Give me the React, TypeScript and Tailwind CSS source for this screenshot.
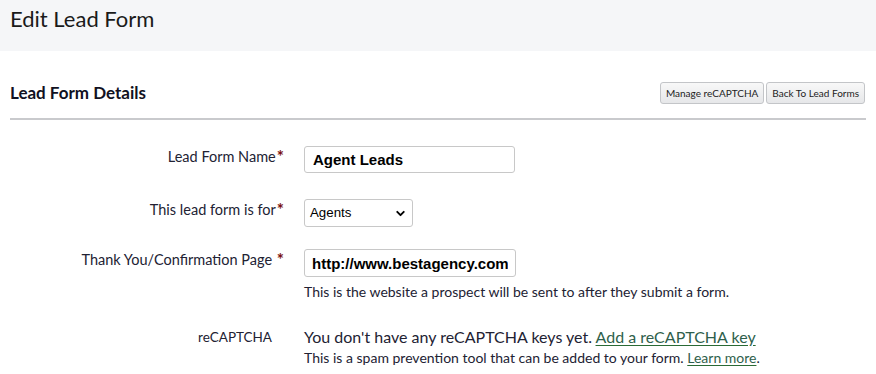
import { ChevronDown } from 'lucide-react';

const font = { fontFamily: 'Lato, "Open Sans", sans-serif' };

function Req() {
    return <span className="ml-[1px] align-top text-[17px] font-bold leading-none text-[#7a0f0f]">*</span>;
}

export default function App() {
    return (
        <div className="h-[374px] w-[876px] overflow-hidden bg-white text-[#222233]" style={font}>
            <div className="flex h-[51px] items-start bg-[#f5f6f8] px-[10px] pt-[5px]">
                <h1 className="text-[22px] leading-[28px] text-[#1a1a1a]">Edit Lead Form</h1>
            </div>

            <div className="px-[10px]">
                <div className="flex h-[69px] items-end justify-between border-b-2 border-[#c9cacd] pb-[14px]">
                    <h2 className="text-[17px] font-bold leading-[22px] text-[#111122]">Lead Form Details</h2>
                    <div className="mr-[1px] flex gap-[2px]">
                        <button className="h-[22px] rounded-[3px] border border-[#c3c5c8] bg-gradient-to-b from-[#f8f8f8] to-[#e6e7e9] px-[5px] text-[10px] text-[#222]">
                            Manage reCAPTCHA
                        </button>
                        <button className="h-[22px] rounded-[3px] border border-[#c3c5c8] bg-gradient-to-b from-[#f8f8f8] to-[#e6e7e9] px-[5px] text-[10px] text-[#222]">
                            Back To Lead Forms
                        </button>
                    </div>
                </div>

                <div className="pt-[26px]">
                    <div className="flex items-start">
                        <label className="w-[274px] pt-[2px] text-right text-[14.5px] leading-[18px]">
                            Lead Form Name<Req />
                        </label>
                        <input
                            className="ml-[20px] h-[27px] w-[211px] rounded-[3px] border border-[#c8c8c8] px-[8px] text-[15px] font-bold text-black"
                            style={{ fontFamily: '"Liberation Sans", Arial, sans-serif' }}
                            defaultValue="Agent Leads"
                        />
                    </div>

                    <div className="mt-[26px] flex items-start">
                        <label className="w-[274px] pt-[2px] text-right text-[14.5px] leading-[18px]">
                            This lead form is for<Req />
                        </label>
                        <div
                            className="relative ml-[20px] flex h-[28px] w-[109px] items-center rounded-[3px] border border-[#c8c8c8] pl-[5px] text-[13.3px] text-black"
                            style={{ fontFamily: '"Liberation Sans", Arial, sans-serif' }}
                        >
                            Agents
                            <ChevronDown className="absolute right-[5px] h-[13px] w-[13px]" strokeWidth={3.5} />
                        </div>
                    </div>

                    <div className="mt-[22px] flex items-start">
                        <label className="w-[274px] pt-[2px] text-right text-[14.5px] leading-[18px]">
                            Thank You/Confirmation Page <Req />
                        </label>
                        <div className="ml-[20px]">
                            <input
                                className="h-[28px] w-[212px] rounded-[3px] border border-[#c8c8c8] px-[7px] text-[15px] font-bold text-black"
                                style={{ fontFamily: '"Liberation Sans", Arial, sans-serif' }}
                                defaultValue="http://www.bestagency.com"
                            />
                            <p className="mt-[6px] text-[14px] leading-[18px] text-[#222233]">
                                This is the website a prospect will be sent to after they submit a form.
                            </p>
                        </div>
                    </div>

                    <div className="mt-[26px] flex items-start">
                        <label className="w-[274px] pr-[12px] pt-[1px] text-right text-[13.5px] leading-[18px]">
                            reCAPTCHA
                        </label>
                        <div className="ml-[20px]">
                            <p className="text-[16px] leading-[20px]">
                                You don't have any reCAPTCHA keys yet.{' '}
                                <a href="#" className="text-[#2f5f4c] underline decoration-[#2a6a35] underline-offset-2">
                                    Add a reCAPTCHA key
                                </a>
                            </p>
                            <p className="mt-[2px] text-[14px] leading-[18px]">
                                This is a spam prevention tool that can be added to your form.{' '}
                                <a href="#" className="text-[#2f5f4c] underline decoration-[#2a6a35] underline-offset-2">
                                    Learn more
                                </a>
                                .
                            </p>
                        </div>
                    </div>
                </div>
            </div>
        </div>
    );
}
